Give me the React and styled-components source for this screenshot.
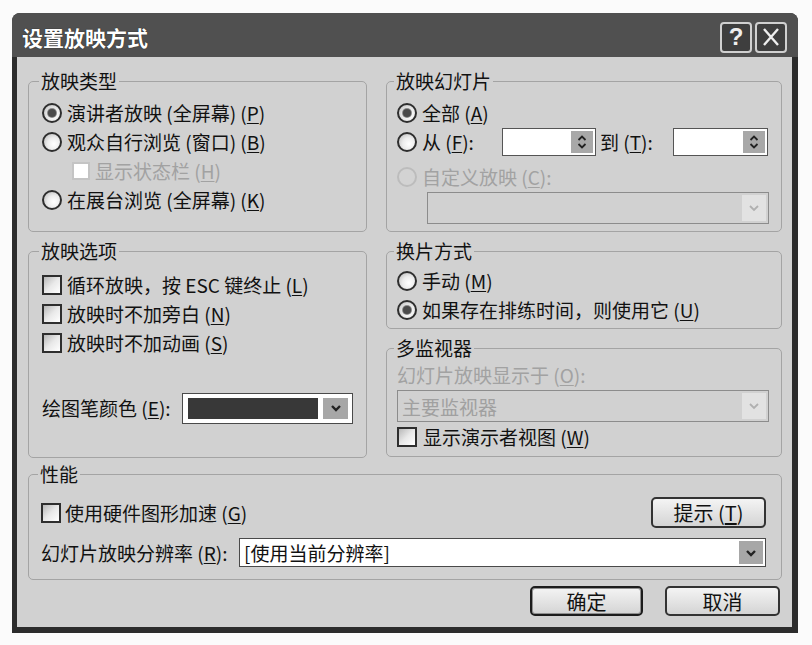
import React from "react"
import styled, { createGlobalStyle } from "styled-components"

const GlobalStyle = createGlobalStyle`
  body {
    margin: 0;
    background: #fbfbfb;
    font-family: "Noto Sans CJK SC", "Noto Sans", sans-serif;
  }
`

const Dialog = styled.div`
  margin: 13px 0 0 12px;
  width: 786px;
  height: 620px;
  display: flex;
  flex-direction: column;
  background: #2c2c2c;
  border-radius: 8px 8px 0 0;
  overflow: hidden;
`

const TitleBar = styled.div`
  height: 44px;
  flex-shrink: 0;
  box-sizing: border-box;
  display: flex;
  align-items: center;
  gap: 3px;
  padding: 4px 11px 0 10px;
  background: #505050;
`

const Title = styled.div`
  flex: 1;
  color: #fff;
  font-size: 21px;
  font-weight: 700;
  text-shadow: 0 0 1px #000;
`

const CaptionButton = styled.div`
  width: 32px;
  height: 31px;
  box-sizing: border-box;
  border: 2px solid #d0d0d0;
  border-radius: 4px;
  background: #3e3e3e;
  display: flex;
  align-items: center;
  justify-content: center;
  color: #eee;
  font: bold 24px "Liberation Sans", sans-serif;
`

const Client = styled.div`
  flex: 1;
  margin: 0 6px 6px 5px;
  padding: 15px 10px 0 11px;
  background: #d1d1d1;
  display: flex;
  flex-direction: column;
`

const TopGrid = styled.div`
  display: grid;
  grid-template-columns: 339px 396px;
  grid-template-rows: 160px 216px;
  column-gap: 19px;
  row-gap: 10px;
`

const Column = styled.div`
  display: flex;
  flex-direction: column;
  gap: 10px;
`

const Group = styled.fieldset`
  margin: ${p => p.$mt || 0}px 0 0 0;
  min-width: 0;
  box-sizing: border-box;
  height: ${p => p.$h}px;
  padding: ${p => p.$pad};
  border: 1px solid #a4a4a4;
  border-radius: 5px;
`

const Legend = styled.legend`
  padding: 0 2px;
  margin-left: -3px;
  font-size: 19px;
  line-height: 18px;
  color: #111;
`

const Row = styled.div`
  display: flex;
  align-items: center;
  height: ${p => p.$h || 29}px;
  margin-top: ${p => p.$mt || 0}px;
  padding-left: ${p => p.$indent || 0}px;
`

const Text = styled.span`
  margin-left: ${p => (p.$gap === undefined ? 5 : p.$gap)}px;
  width: ${p => (p.$w ? `${p.$w}px` : "auto")};
  flex-shrink: 0;
  font-size: 19px;
  line-height: 22px;
  white-space: nowrap;
  color: ${p => (p.$disabled ? "#a2a2a2" : "#111")};
`

const Key = styled.u`
  text-underline-offset: 2px;
`

const Radio = styled.span`
  width: 20px;
  height: 20px;
  flex-shrink: 0;
  box-sizing: border-box;
  border-radius: 50%;
  border: 2px solid ${p => (p.$disabled ? "#bcbcbc" : "#2e2e2e")};
  background: ${p =>
    p.$disabled
      ? "#d3d3d3"
      : "radial-gradient(circle at 62% 62%, #fff 0%, #ececec 45%, #b4b4b4 100%)"};
  display: flex;
  align-items: center;
  justify-content: center;

  &::after {
    content: "";
    display: ${p => (p.$checked ? "block" : "none")};
    width: 8px;
    height: 8px;
    border-radius: 50%;
    background: #4a4a4a;
    box-shadow: 0 0 0 1px #8a8a8a;
  }
`

const Check = styled.span`
  width: ${p => p.$size || 20}px;
  height: ${p => p.$size || 20}px;
  flex-shrink: 0;
  box-sizing: border-box;
  border: 2px solid ${p => (p.$disabled ? "#c4c4c4" : "#2e2e2e")};
  background: ${p =>
    p.$disabled ? "#fff" : "linear-gradient(135deg, #b8b8b8 0%, #e9e9e9 50%, #fff 100%)"};
`

const Spin = styled.div`
  width: ${p => p.$w}px;
  height: 28px;
  flex-shrink: 0;
  box-sizing: border-box;
  border: 1px solid #555;
  background: #fff;
  display: flex;
  justify-content: flex-end;
  padding: 2px;
  margin-left: ${p => p.$ml || 0}px;
`

const SpinButtons = styled.span`
  width: 22px;
  background: #a8a8a8;
  display: flex;
  align-items: center;
  justify-content: center;
`

const Combo = styled.div`
  flex: ${p => (p.$w ? "none" : 1)};
  width: ${p => (p.$w ? `${p.$w}px` : "auto")};
  height: ${p => p.$h || 32}px;
  margin: ${p => p.$mt || 0}px 0 0 ${p => p.$ml || 0}px;
  box-sizing: border-box;
  border: 1px solid ${p => (p.$disabled ? "#8c8c8c" : "#4a4a4a")};
  background: ${p => (p.$disabled ? "#d1d1d1" : "#fff")};
  display: flex;
  align-items: stretch;
  gap: ${p => p.$gap || 0}px;
  padding: ${p => p.$pad || "2px 2px 2px 4px"};
`

const ComboText = styled.span`
  flex: 1;
  align-self: center;
  font-size: 19px;
  white-space: nowrap;
  color: ${p => (p.$disabled ? "#a0a0a0" : "#111")};
`

const Swatch = styled.span`
  flex: 1;
  background: #383838;
`

const DropButton = styled.span`
  width: ${p => p.$w || 24}px;
  background: ${p => (p.$disabled ? "#e2e2e2" : "#a7a7a7")};
  display: flex;
  align-items: center;
  justify-content: center;
`

const SplitRow = styled.div`
  display: flex;
  align-items: center;
  justify-content: space-between;
  height: 31px;
`

const ButtonRow = styled.div`
  display: flex;
  justify-content: flex-end;
  gap: 22px;
  margin-top: 6px;
  padding-right: 2px;
`

const Button = styled.button`
  width: ${p => p.$w}px;
  height: ${p => p.$h || 30}px;
  box-sizing: border-box;
  padding: 0;
  border: 2px solid ${p => (p.$default ? "#1c1c1c" : "#333")};
  border-radius: 5px;
  background: linear-gradient(#f4f4f4, #d4d4d4);
  box-shadow: ${p => (p.$default ? "inset 0 0 0 1px #8f8f8f" : "none")};
  font-family: inherit;
  font-size: 20px;
  color: #111;
  display: flex;
  align-items: center;
  justify-content: center;
`

const Chevron = ({ color = "#222", width = 2.4 }) => (
  <svg width="14" height="14" viewBox="0 0 14 14">
    <path d="M3 5 L7 9 L11 5" fill="none" stroke={color} strokeWidth={width} />
  </svg>
)

const SpinArrows = () => (
  <svg width="12" height="18" viewBox="0 0 12 18">
    <path d="M2.5 7 L6 3.5 L9.5 7" fill="none" stroke="#222" strokeWidth="1.8" />
    <path d="M2.5 11 L6 14.5 L9.5 11" fill="none" stroke="#222" strokeWidth="1.8" />
  </svg>
)

const CloseGlyph = () => (
  <svg width="18" height="20" viewBox="0 0 18 20">
    <path d="M2 2 L16 18 M16 2 L2 18" stroke="#eee" strokeWidth="2.4" />
  </svg>
)

const Choice = ({ kind = "radio", checked, disabled, children, gap }) => (
  <>
    {kind === "radio" ? (
      <Radio $checked={checked} $disabled={disabled} />
    ) : (
      <Check $disabled={disabled} $size={disabled ? 18 : 20} />
    )}
    <Text $disabled={disabled} $gap={gap}>
      {children}
    </Text>
  </>
)

export default function App() {
  return (
    <>
      <GlobalStyle />
      <Dialog>
        <TitleBar>
          <Title>设置放映方式</Title>
          <CaptionButton>?</CaptionButton>
          <CaptionButton>
            <CloseGlyph />
          </CaptionButton>
        </TitleBar>

        <Client>
          <TopGrid>
            <Group $h={160} $pad="8px 12px 0 13px">
              <Legend>放映类型</Legend>
              <Row>
                <Choice checked>
                  演讲者放映 (全屏幕) (<Key>P</Key>)
                </Choice>
              </Row>
              <Row>
                <Choice>
                  观众自行浏览 (窗口) (<Key>B</Key>)
                </Choice>
              </Row>
              <Row $indent={30}>
                <Choice kind="check" disabled>
                  显示状态栏 (<Key>H</Key>)
                </Choice>
              </Row>
              <Row>
                <Choice>
                  在展台浏览 (全屏幕) (<Key>K</Key>)
                </Choice>
              </Row>
            </Group>

            <Group $h={160} $pad="8px 12px 0 10px">
              <Legend>放映幻灯片</Legend>
              <Row>
                <Choice checked>
                  全部 (<Key>A</Key>)
                </Choice>
              </Row>
              <Row $h={30}>
                <Radio />
                <Text $w={80}>
                  从 (<Key>F</Key>):
                </Text>
                <Spin $w={94}>
                  <SpinButtons>
                    <SpinArrows />
                  </SpinButtons>
                </Spin>
                <Text $gap={4} $w={73}>
                  到 (<Key>T</Key>):
                </Text>
                <Spin $w={95}>
                  <SpinButtons>
                    <SpinArrows />
                  </SpinButtons>
                </Spin>
              </Row>
              <Row $h={24} $mt={8}>
                <Choice disabled>
                  自定义放映 (<Key>C</Key>):
                </Choice>
              </Row>
              <Combo $disabled $ml={30} $mt={3}>
                <ComboText />
                <DropButton $disabled>
                  <Chevron color="#b0b0b0" width={1.8} />
                </DropButton>
              </Combo>
            </Group>

            <Group $h={216} $pad="10px 12px 0 13px">
              <Legend>放映选项</Legend>
              <Row>
                <Choice kind="check">
                  循环放映，按 ESC 键终止 (<Key>L</Key>)
                </Choice>
              </Row>
              <Row>
                <Choice kind="check">
                  放映时不加旁白 (<Key>N</Key>)
                </Choice>
              </Row>
              <Row>
                <Choice kind="check">
                  放映时不加动画 (<Key>S</Key>)
                </Choice>
              </Row>
              <Row $h={32} $mt={35}>
                <Text $gap={0} $w={140}>
                  绘图笔颜色 (<Key>E</Key>):
                </Text>
                <Combo $w={171} $h={31} $pad="4px 4px 4px 5px" $gap={5}>
                  <Swatch />
                  <DropButton $w={25}>
                    <Chevron />
                  </DropButton>
                </Combo>
              </Row>
            </Group>

            <Column>
              <Group $h={87} $pad="6px 12px 0 10px">
                <Legend>换片方式</Legend>
                <Row>
                  <Choice>
                    手动 (<Key>M</Key>)
                  </Choice>
                </Row>
                <Row>
                  <Choice checked>
                    如果存在排练时间，则使用它 (<Key>U</Key>)
                  </Choice>
                </Row>
              </Group>

              <Group $h={118} $pad="7px 12px 0 10px">
                <Legend>多监视器</Legend>
                <Row $h={22}>
                  <Text $gap={0} $disabled>
                    幻灯片放映显示于 (<Key>O</Key>):
                  </Text>
                </Row>
                <Combo $disabled $mt={4}>
                  <ComboText $disabled>主要监视器</ComboText>
                  <DropButton $disabled>
                    <Chevron color="#b0b0b0" width={1.8} />
                  </DropButton>
                </Combo>
                <Row $h={30}>
                  <Choice kind="check" gap={6}>
                    显示演示者视图 (<Key>W</Key>)
                  </Choice>
                </Row>
              </Group>
            </Column>
          </TopGrid>

          <Group $h={115} $mt={7} $pad="14px 15px 0 12px">
            <Legend>性能</Legend>
            <SplitRow>
              <Row $h={31}>
                <Check />
                <Text $gap={4}>
                  使用硬件图形加速 (<Key>G</Key>)
                </Text>
              </Row>
              <Button $w={115} $h={31}>
                提示 (<Key>T</Key>)
              </Button>
            </SplitRow>
            <Row $mt={10}>
              <Text $gap={0} $w={198}>
                幻灯片放映分辨率 (<Key>R</Key>):
              </Text>
              <Combo $h={29}>
                <ComboText>[使用当前分辨率]</ComboText>
                <DropButton>
                  <Chevron />
                </DropButton>
              </Combo>
            </Row>
          </Group>

          <ButtonRow>
            <Button $w={113} $default>
              确定
            </Button>
            <Button $w={115}>取消</Button>
          </ButtonRow>
        </Client>
      </Dialog>
    </>
  )
}
